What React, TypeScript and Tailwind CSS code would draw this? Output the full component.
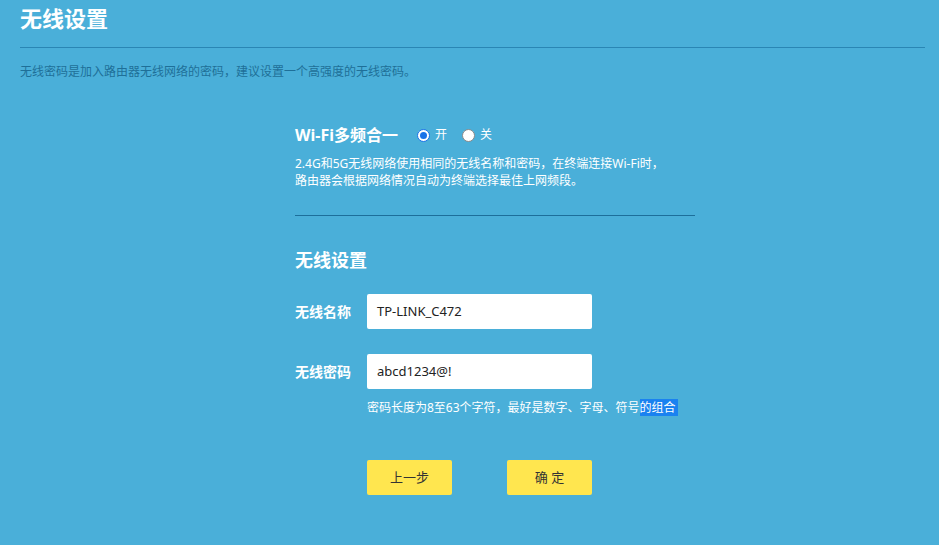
import React from "react";

const font = { fontFamily: '"Noto Sans", "Noto Sans CJK SC", sans-serif' };

export default function App() {
  return (
    <div className="w-[939px] h-[545px] bg-[#4aafd9] overflow-hidden" style={font}>
      <div className="px-5 pt-[3px]">
        <h1 className="text-[22px] leading-[30px] font-bold text-white">无线设置</h1>
        <div className="mt-[14px] h-px bg-[#2a86b4] w-[905px]" />
        <p className="mt-[16px] text-[12px] leading-[16px] text-[#1f6f98]">
          无线密码是加入路由器无线网络的密码，建议设置一个高强度的无线密码。
        </p>
      </div>

      <div className="ml-[295px] w-[400px] mt-[43px]">
        <div className="flex items-center h-[24px]">
          <span className="text-[16px] font-bold text-white">Wi-Fi多频合一</span>
          <label className="ml-[19px] flex items-center gap-[5px] text-[12px] text-white">
            <span className="w-[13px] h-[13px] rounded-full bg-white border border-[#1a73e8] flex items-center justify-center">
              <span className="w-[7px] h-[7px] rounded-full bg-[#1a73e8]" />
            </span>
            开
          </label>
          <label className="ml-[15px] flex items-center gap-[5px] text-[12px] text-white">
            <span className="w-[13px] h-[13px] rounded-full bg-white border border-[#8a8a8a]" />
            关
          </label>
        </div>
        <p className="mt-[8px] text-[12px] leading-[17px] text-white">
          2.4G和5G无线网络使用相同的无线名称和密码，在终端连接Wi-Fi时，
          <br />
          路由器会根据网络情况自动为终端选择最佳上网频段。
        </p>
        <div className="mt-[26px] h-px bg-[#1d6f9b] w-[400px]" />
        <h2 className="mt-[30px] text-[18px] leading-[28px] font-bold text-white">无线设置</h2>

        <div className="mt-[20px] flex items-center">
          <span className="w-[72px] text-[14px] font-bold text-white">无线名称</span>
          <div className="w-[225px] h-[35px] bg-white rounded-[2px] flex items-center pl-[10px] text-[13px] text-[#222]">
            TP-LINK_C472
          </div>
        </div>
        <div className="mt-[25px] flex items-center">
          <span className="w-[72px] text-[14px] font-bold text-white">无线密码</span>
          <div className="w-[225px] h-[35px] bg-white rounded-[2px] flex items-center pl-[10px] text-[13px] text-[#222]">
            abcd1234@!
          </div>
        </div>
        <p className="ml-[72px] mt-[11px] text-[12px] leading-[16px] text-white">
          密码长度为8至63个字符，最好是数字、字母、符号<span className="bg-[#1a82f0] pr-[2px]">的组合</span>
        </p>

        <div className="ml-[72px] mt-[44px] flex gap-[55px]">
          <button className="w-[85px] h-[35px] bg-[#ffe64f] rounded-[2px] text-[13px] text-[#333]">上一步</button>
          <button className="w-[85px] h-[35px] bg-[#ffe64f] rounded-[2px] text-[13px] text-[#333]">确 定</button>
        </div>
      </div>
    </div>
  );
}
